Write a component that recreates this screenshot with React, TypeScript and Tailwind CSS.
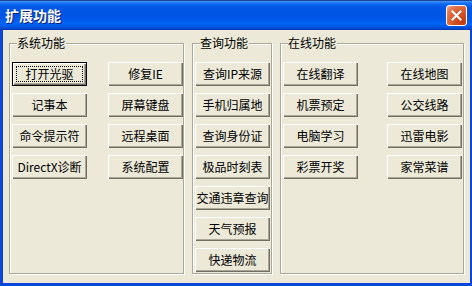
const font = "font-['Noto_Sans_CJK_SC','Noto_Sans',sans-serif]";

const btn =
  "h-[24px] w-[75px] flex items-center justify-center bg-[#ece9d8] text-[12px] leading-none text-black shadow-[inset_1px_1px_0_#fff,inset_-1px_-1px_0_#716f64,inset_-2px_-2px_0_#aca899]";

const Btn = ({ label, isDefault = false }: { label: string; isDefault?: boolean }) => {
  if (isDefault) {
    return (
      <div className={`${btn} relative border border-black`}>
        <span className="absolute inset-[3px] border border-dotted border-black" />
        {label}
      </div>
    );
  }
  return <div className={btn}>{label}</div>;
};

const Group = ({
  title,
  width,
  children,
}: {
  title: string;
  width: string;
  children: React.ReactNode;
}) => (
  <div
    className={`relative h-[231px] ${width} border border-[#aca899] shadow-[inset_1px_1px_0_#fff,1px_1px_0_#fff] pl-[2px] pt-[18px]`}
  >
    <span className="absolute -top-[8px] left-[7px] bg-[#ece9d8] pr-[1px] text-[12px] leading-[14px] text-black">
      {title}
    </span>
    {children}
  </div>
);

export default function App() {
  const system = ["打开光驱", "修复IE", "记事本", "屏幕键盘", "命令提示符", "远程桌面", "DirectX诊断", "系统配置"];
  const query = ["查询IP来源", "手机归属地", "查询身份证", "极品时刻表", "交通违章查询", "天气预报", "快递物流"];
  const online = ["在线翻译", "在线地图", "机票预定", "公交线路", "电脑学习", "迅雷电影", "彩票开奖", "家常菜谱"];

  return (
    <div className={`w-[472px] h-[286px] bg-[#0b45d9] flex flex-col ${font}`}>
      {/* title bar */}
      <div className="h-[30px] flex items-center justify-between pl-[5px] pr-[5px] bg-[linear-gradient(to_bottom,#0a246a_0%,#3d8cf7_5%,#1a75f5_10%,#0a63ec_16%,#0058e6_24%,#0055e3_50%,#0059ea_66%,#0464f4_78%,#0058e8_88%,#0049cf_95%,#0038b0_100%)]">
        <span className="text-[14px] font-bold leading-none text-white [text-shadow:1px_1px_0_#0a1e80]">
          扩展功能
        </span>
        <div className="w-[21px] h-[21px] rounded-[3px] border border-white bg-[radial-gradient(circle_at_85%_85%,#c23c12_0%,#d9582b_50%,#e57a57_80%,#f2b8a2_100%)] flex items-center justify-center">
          <svg width="11" height="11" viewBox="0 0 11 11">
            <path d="M1.5 1.5 L9.5 9.5 M9.5 1.5 L1.5 9.5" stroke="#fff" strokeWidth="2" strokeLinecap="square" />
          </svg>
        </div>
      </div>

      {/* content */}
      <div className="ml-[3px] w-[467px] h-[253px] bg-[#ece9d8] pl-[6px] pt-[13px] flex gap-[8px]">
        <Group title="系统功能" width="w-[175px]">
          <div className="grid grid-cols-[75px_75px] gap-x-[21px] gap-y-[7px]">
            {system.map((s, i) => (
              <Btn key={s} label={s} isDefault={i === 0} />
            ))}
          </div>
        </Group>
        <Group title="查询功能" width="w-[80px]">
          <div className="flex flex-col gap-[7px]">
            {query.map((s) => (
              <Btn key={s} label={s} />
            ))}
          </div>
        </Group>
        <Group title="在线功能" width="w-[184px]">
          <div className="grid grid-cols-[75px_75px] gap-x-[29px] gap-y-[7px]">
            {online.map((s) => (
              <Btn key={s} label={s} />
            ))}
          </div>
        </Group>
      </div>
    </div>
  );
}
